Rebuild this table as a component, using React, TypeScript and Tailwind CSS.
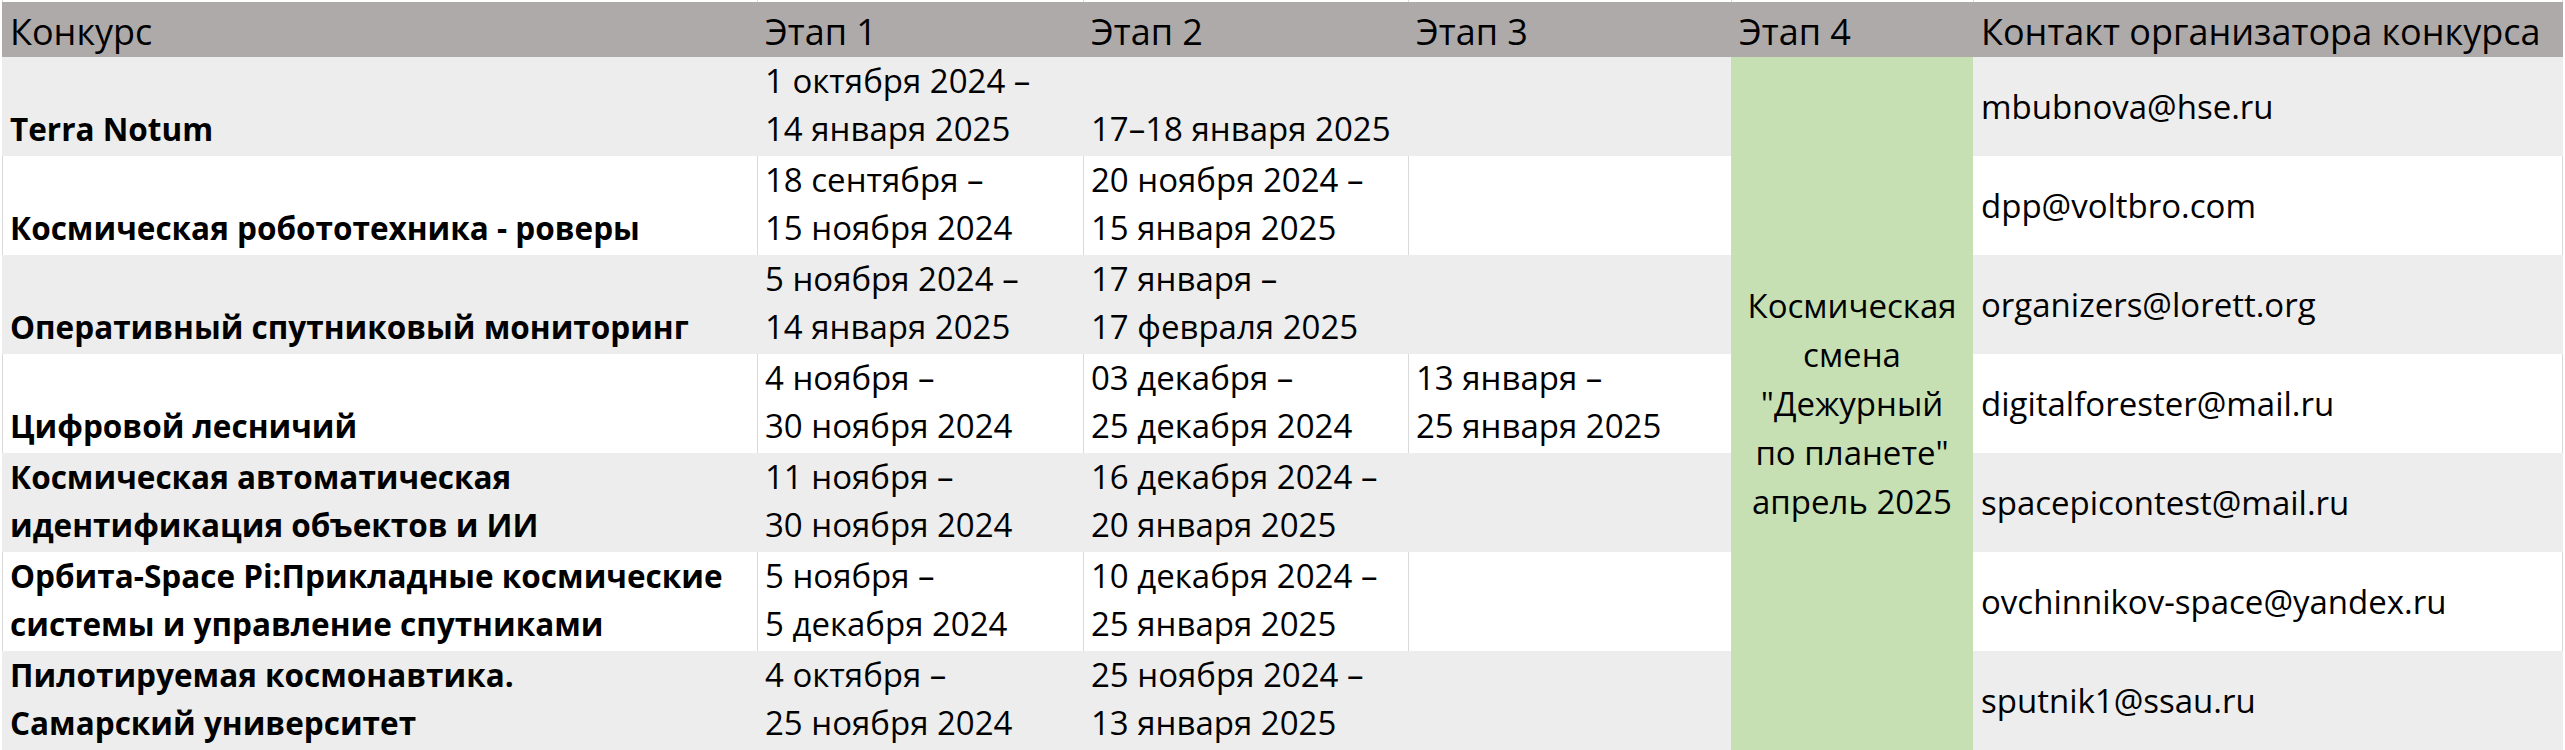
import React from 'react';

interface Row {
  name: string[];
  stage1: string[];
  stage2: string[];
  stage3: string[];
  contact: string;
}

const ROWS: Row[] = [
  { name: ['Terra Notum'], stage1: ['1 октября 2024 –', '14 января 2025'], stage2: ['17–18 января 2025'], stage3: [], contact: 'mbubnova@hse.ru' },
  { name: ['Космическая робототехника - роверы'], stage1: ['18 сентября –', '15 ноября 2024'], stage2: ['20 ноября 2024 –', '15 января 2025'], stage3: [], contact: 'dpp@voltbro.com' },
  { name: ['Оперативный спутниковый мониторинг'], stage1: ['5 ноября 2024 –', '14 января 2025'], stage2: ['17 января –', '17 февраля 2025'], stage3: [], contact: 'organizers@lorett.org' },
  { name: ['Цифровой лесничий'], stage1: ['4 ноября –', '30 ноября 2024'], stage2: ['03 декабря –', '25 декабря 2024'], stage3: ['13 января –', '25 января 2025'], contact: 'digitalforester@mail.ru' },
  { name: ['Космическая автоматическая', 'идентификация объектов и ИИ'], stage1: ['11 ноября –', '30 ноября 2024'], stage2: ['16 декабря 2024 –', '20 января 2025'], stage3: [], contact: 'spacepicontest@mail.ru' },
  { name: ['Орбита-Space Pi:Прикладные космические', 'системы и управление спутниками'], stage1: ['5 ноября –', '5 декабря 2024'], stage2: ['10 декабря 2024 –', '25 января 2025'], stage3: [], contact: 'ovchinnikov-space@yandex.ru' },
  { name: ['Пилотируемая космонавтика.', 'Самарский университет'], stage1: ['4 октября –', '25 ноября 2024'], stage2: ['25 ноября 2024 –', '13 января 2025'], stage3: [], contact: 'sputnik1@ssau.ru' },
];

const HEADERS = ['Конкурс', 'Этап 1', 'Этап 2', 'Этап 3', 'Этап 4', 'Контакт организатора конкурса'];

const Lines: React.FC<{ lines: string[] }> = ({ lines }) => (
  <>
    {lines.map((l, i) => (
      <div key={i} className="whitespace-nowrap">{l}</div>
    ))}
  </>
);

const App: React.FC = () => {
  return (
    <div className="w-[2565px] h-[750px] overflow-hidden bg-white text-black text-[33px] leading-[48px] font-['Open_Sans','Noto_Sans',sans-serif]">
      <div className="grid grid-cols-[2px_755px_326px_325px_323px_242px_590px_2px] grid-rows-[2px_55px_repeat(7,99px)]">
        {/* merged stage 4 cell, placed first so the rest auto-flows around it */}
        <div className="col-start-6 row-start-3 row-span-7 bg-[#c6e0b4] flex items-center justify-center text-center leading-[49px]">
          <div>
            Космическая<br />
            смена<br />
            "Дежурный<br />
            по планете"<br />
            апрель 2025
          </div>
        </div>

        {/* top strip with gridlines */}
        <div />
        <div className="border-l border-[#dadada]" />
        <div className="border-l border-[#dadada]" />
        <div className="border-l border-[#dadada]" />
        <div className="border-l border-[#dadada]" />
        <div className="border-l border-[#dadada]" />
        <div className="border-l border-r border-[#dadada]" />
        <div />

        {/* header */}
        <div />
        {HEADERS.map(h => (
          <div key={h} className="bg-[#aeaaaa] flex items-end pl-[8px] pb-[1px] text-[36px] whitespace-nowrap">{h}</div>
        ))}
        <div />

        {ROWS.map((row, i) => {
          const gray = i % 2 === 0;
          const cell = gray
            ? 'bg-[#ededed] flex flex-col justify-end pl-[8px] pb-[3px]'
            : 'bg-white border-l border-[#dadada] flex flex-col justify-end pl-[7px] pb-[3px]';
          return (
            <React.Fragment key={i}>
              <div />
              <div className={`${cell} font-bold text-[31.5px]`}>
                <Lines lines={row.name} />
              </div>
              <div className={cell}>
                <Lines lines={row.stage1} />
              </div>
              <div className={cell}>
                <Lines lines={row.stage2} />
              </div>
              <div className={cell}>
                <Lines lines={row.stage3} />
              </div>
              <div className={`flex items-center pl-[8px] whitespace-nowrap ${gray ? 'bg-[#ededed]' : 'bg-white border-r border-[#dadada]'}`}>
                {row.contact}
              </div>
              <div />
            </React.Fragment>
          );
        })}
      </div>
    </div>
  );
};

export default App;
